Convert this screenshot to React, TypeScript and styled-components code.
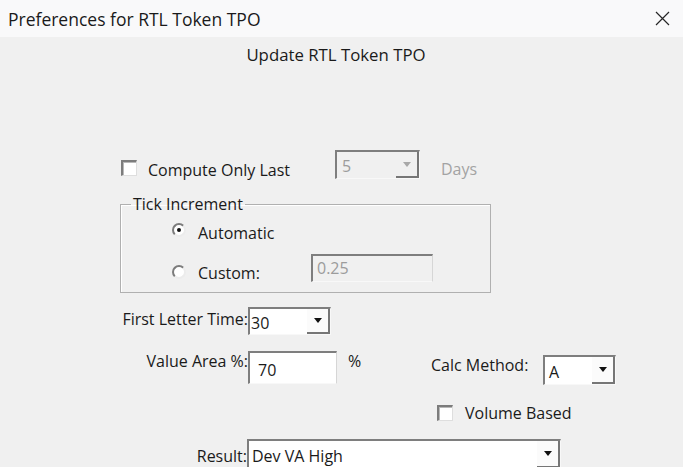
import React from 'react'
import styled, { createGlobalStyle } from 'styled-components'

const GlobalStyle = createGlobalStyle`
  html, body {
    margin: 0;
    padding: 0;
    background: #f0f0f0;
  }
  body {
    font-family: "Open Sans", "Noto Sans", sans-serif;
  }
  * {
    box-sizing: border-box;
  }
`

const Window = styled.div`
  width: 683px;
  height: 467px;
  overflow: hidden;
  display: flex;
  flex-direction: column;
  background: #f0f0f0;
  color: #1a1a1a;
  font-size: 16px;
  line-height: 20px;
`

const TitleBar = styled.div`
  flex: none;
  height: 37px;
  display: flex;
  align-items: center;
  justify-content: space-between;
  padding: 0 13px 0 8px;
  background: #f9f9fa;
  font-size: 17.5px;
  color: #1a1a1a;
`

const CloseButton = styled.div`
  display: flex;
  align-items: center;
  justify-content: center;
  width: 15px;
  height: 15px;
`

const Body = styled.div`
  flex: 1;
  display: flex;
  flex-direction: column;
`

const Heading = styled.div`
  margin-top: 8px;
  padding-right: 11px;
  text-align: center;
  font-size: 16.8px;
`

const Row = styled.div<{ $top: number; $left?: number }>`
  display: flex;
  align-items: flex-start;
  margin-top: ${p => p.$top}px;
  padding-left: ${p => p.$left ?? 0}px;
`

const Label = styled.span<{ $w?: number; $top?: number; $left?: number; $right?: boolean; $muted?: boolean }>`
  flex: none;
  width: ${p => (p.$w ? `${p.$w}px` : 'auto')};
  margin-top: ${p => p.$top ?? 0}px;
  margin-left: ${p => p.$left ?? 0}px;
  text-align: ${p => (p.$right ? 'right' : 'left')};
  white-space: nowrap;
  color: ${p => (p.$muted ? '#a3a3a3' : 'inherit')};
`

const CheckBox = styled.span<{ $top?: number }>`
  flex: none;
  width: 16px;
  height: 16px;
  margin-top: ${p => p.$top ?? 0}px;
  background: #fff;
  border-style: solid;
  border-width: 2px 1px 1px 2px;
  border-color: #7c7c7c #dedede #dedede #7c7c7c;
  box-shadow: inset 1px 1px 0 #b8b8b8;
`

const Radio = styled.span<{ $top?: number; $checked?: boolean }>`
  flex: none;
  position: relative;
  width: 14px;
  height: 14px;
  margin-top: ${p => p.$top ?? 0}px;
  border-radius: 50%;
  background: #fff;
  border: 2px solid;
  border-color: #7c7c7c #ececec #ececec #7c7c7c;

  &::after {
    content: '';
    display: ${p => (p.$checked ? 'block' : 'none')};
    position: absolute;
    left: 3px;
    top: 3px;
    width: 4px;
    height: 4px;
    border-radius: 50%;
    background: #111;
  }
`

const Field = styled.div<{ $w: number; $h: number; $top?: number; $disabled?: boolean; $padTop?: number; $padLeft?: number }>`
  flex: none;
  display: flex;
  width: ${p => p.$w}px;
  height: ${p => p.$h}px;
  margin-top: ${p => p.$top ?? 0}px;
  padding: ${p => p.$padTop ?? 2}px 0 0 ${p => p.$padLeft ?? 3}px;
  background: ${p => (p.$disabled ? '#f0f0f0' : '#fff')};
  color: ${p => (p.$disabled ? '#9c9c9c' : '#1a1a1a')};
  border-style: solid;
  border-width: 2px 1px 1px 2px;
  border-color: #7e7e7e #d6d6d6 #f8f8f8 #7e7e7e;
`

const Combo = styled.div<{ $w: number; $h: number; $top?: number; $disabled?: boolean }>`
  flex: none;
  display: flex;
  width: ${p => p.$w}px;
  height: ${p => p.$h}px;
  margin-top: ${p => p.$top ?? 0}px;
  background: ${p => (p.$disabled ? '#f0f0f0' : '#fff')};
  color: ${p => (p.$disabled ? '#9c9c9c' : '#1a1a1a')};
  border-style: solid;
  border-width: 2px 1px 1px 2px;
  border-color: #7e7e7e #f8f8f8 #f8f8f8 #7e7e7e;
`

const ComboText = styled.span<{ $padLeft?: number }>`
  flex: 1;
  align-self: center;
  padding-left: ${p => p.$padLeft ?? 4}px;
  padding-top: 2px;
  white-space: nowrap;
`

const DropButton = styled.span<{ $disabled?: boolean }>`
  flex: none;
  width: 23px;
  display: flex;
  align-items: center;
  justify-content: center;
  background: ${p => (p.$disabled ? '#f0f0f0' : '#fbfbfb')};
  border-right: 2px solid #767676;
  border-bottom: 2px solid #767676;

  &::before {
    content: '';
    border-left: 4px solid transparent;
    border-right: 4px solid transparent;
    border-top: 5px solid ${p => (p.$disabled ? '#a8a8a8' : '#111')};
  }
`

const GroupBox = styled.fieldset`
  margin: 14px 0 0 120px;
  padding: 0 0 9px 0;
  width: 371px;
  min-width: 0;
  border: 1px solid #b0b0b0;
  box-shadow: inset 1px 1px 0 #fff;
`

const Legend = styled.legend`
  margin-left: 10px;
  padding: 0 2px;
  line-height: 20px;
`

const GroupContent = styled.div`
  display: flex;
  flex-direction: column;
  padding-left: 51px;
`

type ComboProps = {
  value: string
  w: number
  h: number
  top?: number
  padLeft?: number
  disabled?: boolean
}

const ComboBox: React.FC<ComboProps> = ({ value, w, h, top, padLeft, disabled }) => (
  <Combo $w={w} $h={h} $top={top} $disabled={disabled}>
    <ComboText $padLeft={padLeft}>{value}</ComboText>
    <DropButton $disabled={disabled} />
  </Combo>
)

const App: React.FC = () => {
  return (
    <Window>
      <GlobalStyle />
      <TitleBar>
        <span>Preferences for RTL Token TPO</span>
        <CloseButton>
          <svg width="15" height="15" viewBox="0 0 15 15">
            <path d="M1 1 L14 14 M14 1 L1 14" stroke="#262626" strokeWidth="1.2" fill="none" />
          </svg>
        </CloseButton>
      </TitleBar>

      <Body>
        <Heading>Update RTL Token TPO</Heading>

        <Row $top={85} $left={121}>
          <CheckBox $top={10} />
          <Label $w={187} $left={11} $top={10}>Compute Only Last</Label>
          <ComboBox value="5" w={85} h={29} padLeft={5} disabled />
          <Label $left={21} $top={9} $muted>Days</Label>
        </Row>

        <GroupBox>
          <Legend>Tick Increment</Legend>
          <GroupContent>
            <Row $top={8}>
              <Radio $top={1} $checked />
              <Label $left={12} $top={1}>Automatic</Label>
            </Row>
            <Row $top={11}>
              <Radio $top={11} />
              <Label $w={113} $left={12} $top={9}>Custom:</Label>
              <Field $w={122} $h={28} $padTop={2} $padLeft={4} $disabled>0.25</Field>
            </Row>
          </GroupContent>
        </GroupBox>

        <Row $top={14}>
          <Label $w={248} $right $top={2}>First Letter Time:</Label>
          <ComboBox value="30" w={83} h={28} padLeft={1} />
        </Row>

        <Row $top={16}>
          <Label $w={248} $right $top={0}>Value Area %:</Label>
          <Field $w={89} $h={33} $padTop={7} $padLeft={8}>70</Field>
          <Label $w={83} $left={11} $top={0}>%</Label>
          <Label $w={112} $top={4}>Calc Method:</Label>
          <ComboBox value="A" w={73} h={30} top={4} padLeft={4} />
        </Row>

        <Row $top={20} $left={437}>
          <CheckBox />
          <Label $left={12} $top={-2}>Volume Based</Label>
        </Row>

        <Row $top={16}>
          <Label $w={247} $right $top={7}>Result:</Label>
          <ComboBox value="Dev VA High" w={314} h={30} padLeft={3} />
        </Row>
      </Body>
    </Window>
  )
}

export default App
